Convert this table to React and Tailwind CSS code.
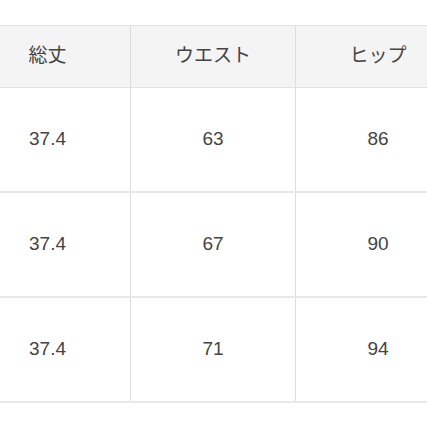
const headers = ['総丈', 'ウエスト', 'ヒップ']
const rows = [
  ['37.4', '63', '86'],
  ['37.4', '67', '90'],
  ['37.4', '71', '94'],
]

const App = () => {
  return (
    <div className="w-[427px] h-[427px] overflow-hidden bg-white pt-[25px]">
      <div
        className="ml-[-35px] w-[495px] text-[#444] text-center"
        style={{ fontFamily: '"Liberation Sans", "Noto Sans CJK JP", sans-serif' }}
      >
        <div className="grid grid-cols-3 h-[63px] bg-[#f4f4f4] border-y border-[#e2e2e2]">
          {headers.map((h, i) => (
            <div
              key={i}
              className={`flex items-center justify-center text-[19px] ${i > 0 ? 'border-l border-[#dcdcdc]' : ''}`}
            >
              {h}
            </div>
          ))}
        </div>
        {rows.map((r, ri) => (
          <div key={ri} className="grid grid-cols-3 h-[105px] border-b-2 border-[#e8e8e8]">
            {r.map((v, ci) => (
              <div
                key={ci}
                className={`flex items-center justify-center text-[19px] ${ci > 0 ? 'border-l border-[#dcdcdc]' : ''}`}
              >
                {v}
              </div>
            ))}
          </div>
        ))}
      </div>
    </div>
  )
}

export default App
